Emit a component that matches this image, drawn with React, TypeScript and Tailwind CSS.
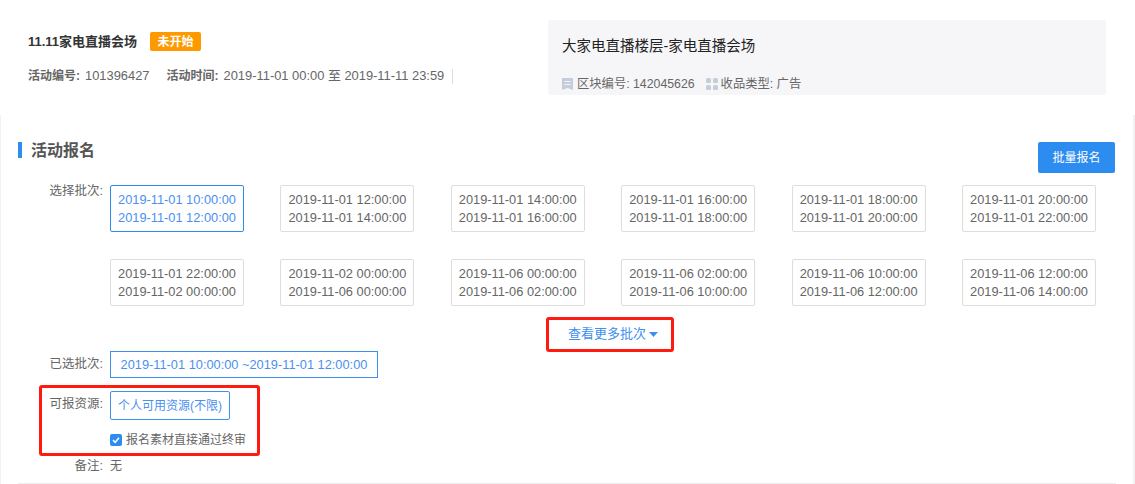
const batches = [
  ['2019-11-01 10:00:00', '2019-11-01 12:00:00'],
  ['2019-11-01 12:00:00', '2019-11-01 14:00:00'],
  ['2019-11-01 14:00:00', '2019-11-01 16:00:00'],
  ['2019-11-01 16:00:00', '2019-11-01 18:00:00'],
  ['2019-11-01 18:00:00', '2019-11-01 20:00:00'],
  ['2019-11-01 20:00:00', '2019-11-01 22:00:00'],
  ['2019-11-01 22:00:00', '2019-11-02 00:00:00'],
  ['2019-11-02 00:00:00', '2019-11-06 00:00:00'],
  ['2019-11-06 00:00:00', '2019-11-06 02:00:00'],
  ['2019-11-06 02:00:00', '2019-11-06 10:00:00'],
  ['2019-11-06 10:00:00', '2019-11-06 12:00:00'],
  ['2019-11-06 12:00:00', '2019-11-06 14:00:00'],
]

const App = () => {
  return (
    <div className="relative h-[484px] w-[1135px] overflow-hidden bg-white text-[12.5px] text-[#666] [font-family:'Liberation_Sans','Noto_Sans_CJK_SC',sans-serif]">
      {/* header */}
      <div className="flex h-[115px] pl-[28px] pr-[29px] pt-[20px]">
        <div className="w-[520px] pt-[12px]">
          <div className="flex h-[19px] items-center">
            <span className="text-[13px] font-bold text-[#333]">11.11家电直播会场</span>
            <span className="ml-[13px] flex h-[19px] w-[51px] items-center justify-center rounded-[2px] bg-[#ff9900] text-[12px] font-bold text-white">未开始</span>
          </div>
          <div className="mt-[17px] flex h-[16px] items-center">
            <span className="text-[12px] font-bold text-[#666]">活动编号:</span>
            <span className="ml-[5px] text-[12.9px]">101396427</span>
            <span className="ml-[17px] text-[12px] font-bold text-[#666]">活动时间:</span>
            <span className="ml-[5px] text-[12.9px]">2019-11-01 00:00 至 2019-11-11 23:59</span>
            <span className="ml-[8px] h-[15px] w-px bg-[#ddd]"></span>
          </div>
        </div>
        <div className="h-[75px] w-[558px] rounded-[3px] bg-[#f6f6f8] pl-[14px] pt-[18px]">
          <div className="text-[14.5px] leading-[16px] text-[#222]">大家电直播楼层-家电直播会场</div>
          <div className="mt-[22px] flex h-[16px] items-center text-[12.3px]">
            <svg width="11" height="12" viewBox="0 0 11 12" className="mr-[4px]">
              <path d="M0 0h11v12L5.5 10 0 12z" fill="#c5cddb" />
              <path d="M2.5 3.5h6M2.5 6.5h6" stroke="#f6f6f8" strokeWidth="1" />
            </svg>
            <span>区块编号: 142045626</span>
            <svg width="12" height="12" viewBox="0 0 12 12" className="ml-[11px] mr-[3px]">
              <rect x="0" y="0" width="5" height="5" rx="1.5" fill="#c5cddb" />
              <rect x="7" y="0" width="5" height="5" rx="1.5" fill="#c5cddb" />
              <rect x="0" y="7" width="5" height="5" rx="1.5" fill="#c5cddb" />
              <rect x="7" y="7" width="5" height="5" rx="1.5" fill="#c5cddb" />
            </svg>
            <span>收品类型: 广告</span>
          </div>
        </div>
      </div>

      {/* activity signup */}
      <div className="h-[369px] border-l border-r-2 border-[#f2f2f2] pl-[17px] pr-[18px] pt-[27px]">
        <div className="flex h-[31px] items-start justify-between">
          <div className="flex h-[16px] items-center border-l-[4px] border-[#2d8cf0] pl-[9px] pt-[2px] text-[16px] font-bold text-[#555]">活动报名</div>
          <button className="h-[31px] w-[77px] rounded-[2px] bg-[#2d8cf0] text-[12px] text-white">批量报名</button>
        </div>

        <div className="mt-[12px] flex">
          <div className="w-[92px] pr-[7px] text-right leading-[12px]">选择批次:</div>
          <div>
            <div className="grid w-[986px] grid-cols-6 gap-x-[36.4px] gap-y-[27px]">
              {batches.map((b, i) => (
                <div
                  key={b[0]}
                  className={
                    i === 0
                      ? 'flex h-[47px] flex-col items-center justify-center rounded-[2px] border border-[#2d8cf0] text-[12.8px] leading-[18px] text-[#4a90f0]'
                      : 'flex h-[47px] flex-col items-center justify-center rounded-[2px] border border-[#ddd] text-[12.8px] leading-[18px] text-[#666]'
                  }
                >
                  <div>{b[0]}</div>
                  <div>{b[1]}</div>
                </div>
              ))}
            </div>
            <div className="mt-[12px] flex h-[32px] w-[986px] items-center justify-center pl-[20px] text-[#3d8ff0]">
              <span className="text-[13px]">查看更多批次</span>
              <svg width="9" height="5" viewBox="0 0 9 5" className="ml-[3px]">
                <path d="M0 0h9L4.5 5z" fill="#3d8ff0" />
              </svg>
            </div>
          </div>
        </div>

        <div className="mt-[1px] flex">
          <div className="w-[92px] pr-[7px] pt-[6px] text-right leading-[14px]">已选批次:</div>
          <div className="flex h-[27px] w-[268px] items-center justify-center border border-[#3d8ff0] text-[12.8px] text-[#4a90f0]">2019-11-01 10:00:00 ~2019-11-01 12:00:00</div>
        </div>

        <div className="mt-[13px] flex">
          <div className="w-[92px] pr-[7px] pt-[6px] text-right leading-[14px]">可报资源:</div>
          <div className="flex h-[29px] w-[120px] items-center justify-center rounded-[2px] border border-[#3d8ff0] text-[12px] text-[#4a90f0]">个人可用资源(不限)</div>
        </div>

        <div className="mt-[11px] flex items-center pl-[92px]">
          <span className="flex h-[12px] w-[12px] items-center justify-center rounded-[2px] bg-[#2d8cf0]">
            <svg width="8" height="8" viewBox="0 0 8 8">
              <path d="M1 4.2 3.2 6.3 7 1.8" fill="none" stroke="#fff" strokeWidth="1.6" />
            </svg>
          </span>
          <span className="ml-[4px] text-[12px]">报名素材直接通过终审</span>
        </div>

        <div className="mt-[10px] flex">
          <div className="w-[92px] pr-[7px] text-right leading-[14px]">备注:</div>
          <div className="text-[12px] leading-[14px]">无</div>
        </div>
      </div>
      <div className="absolute left-[18px] top-[483px] h-px w-[1098px] bg-[#eee]"></div>

      {/* red annotations */}
      <div className="absolute left-[546px] top-[317px] h-[35px] w-[128px] rounded-[3px] border-[3px] border-[#ff1a10]"></div>
      <div className="absolute left-[39px] top-[385px] h-[71px] w-[221px] rounded-[3px] border-[3px] border-[#ff1a10]"></div>
    </div>
  )
}

export default App
